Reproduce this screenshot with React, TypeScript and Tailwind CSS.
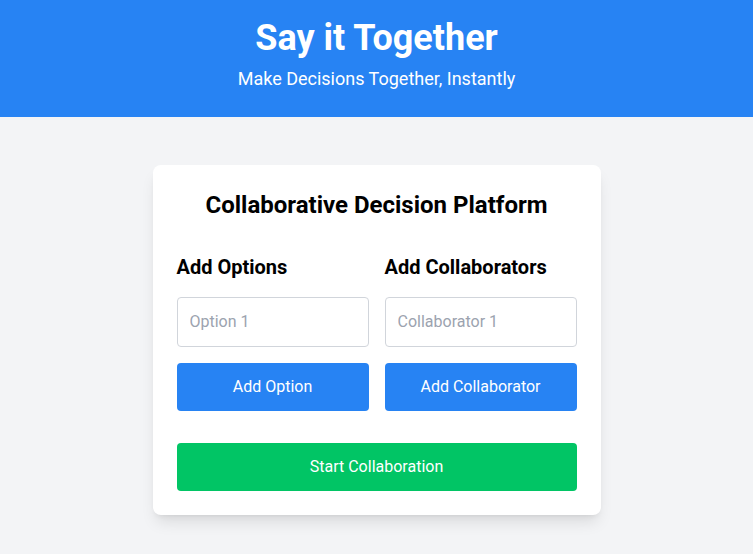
import { useState } from "react";

export default function App() {
  const [option, setOption] = useState("");
  const [collaborator, setCollaborator] = useState("");

  return (
    <div className="min-h-screen bg-[#f3f4f6] font-['Roboto',sans-serif]">
      <header className="bg-[#2783f3] pt-[18px] pb-6 text-center text-white">
        <h1 className="text-4xl font-bold">Say it Together</h1>
        <p className="mt-[7px] text-lg leading-7">Make Decisions Together, Instantly</p>
      </header>

      <main className="mx-auto mt-12 max-w-md rounded-lg bg-white p-6 shadow-lg">
        <h2 className="text-center text-2xl font-bold text-black">
          Collaborative Decision Platform
        </h2>

        <div className="mt-8 grid grid-cols-2 gap-4">
          <section>
            <h3 className="mb-4 text-xl font-bold text-black">Add Options</h3>
            <input
              value={option}
              onChange={(e) => setOption(e.target.value)}
              placeholder="Option 1"
              className="w-full rounded border border-[#d1d5db] px-3 py-3 text-base outline-none placeholder:text-[#9ca3af]"
            />
            <button
              type="button"
              className="mt-4 w-full rounded bg-[#2783f3] py-3 text-base text-white"
            >
              Add Option
            </button>
          </section>
          <section>
            <h3 className="mb-4 text-xl font-bold text-black">Add Collaborators</h3>
            <input
              value={collaborator}
              onChange={(e) => setCollaborator(e.target.value)}
              placeholder="Collaborator 1"
              className="w-full rounded border border-[#d1d5db] px-3 py-3 text-base outline-none placeholder:text-[#9ca3af]"
            />
            <button
              type="button"
              className="mt-4 w-full rounded bg-[#2783f3] py-3 text-base text-white"
            >
              Add Collaborator
            </button>
          </section>
        </div>

        <button
          type="button"
          className="mt-8 w-full rounded bg-[#01c565] py-3 text-base text-white"
        >
          Start Collaboration
        </button>
      </main>
    </div>
  );
}
